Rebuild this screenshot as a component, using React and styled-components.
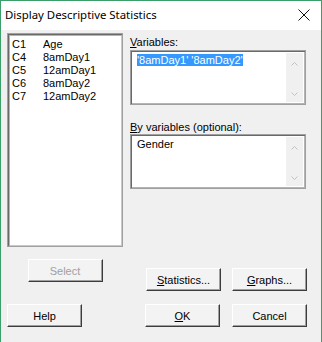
import React from 'react';
import styled, { createGlobalStyle } from 'styled-components';

const GlobalStyle = createGlobalStyle`
  html, body {
    margin: 0;
    padding: 0;
    background: #ffffff;
  }
  body {
    font-family: "Liberation Sans", Arial, sans-serif;
  }
`;

const Window = styled.div`
  width: 322px;
  height: 342px;
  box-sizing: border-box;
  border: 1px solid #3a9f68;
  border-bottom: none;
  background: #f0f0f0;
  display: flex;
  flex-direction: column;
  overflow: hidden;
`;

const TitleBar = styled.div`
  height: 29px;
  flex: none;
  background: #ffffff;
  display: flex;
  align-items: center;
  justify-content: space-between;
  padding: 0 11px 2px 4px;
  box-sizing: border-box;
  font-family: "Noto Sans", "Liberation Sans", sans-serif;
  font-size: 11.4px;
  color: #000000;
`;

const Body = styled.div`
  padding: 3px 0 0 6px;
  font-size: 11px;
  color: #000000;
`;

const MainRow = styled.div`
  display: flex;
  gap: 7px;
`;

const ListBox = styled.div`
  width: 116px;
  height: 214px;
  box-sizing: border-box;
  background: #ffffff;
  border: 1px solid #a0a0a0;
  box-shadow: inset 1px 1px 0 #696969, inset 2px 2px 0 #b4b4b4, inset -1px -1px 0 #c8c8c8;
  padding: 4px 0 0 4px;
`;

const ListRow = styled.div`
  display: flex;
  height: 13px;
  line-height: 13px;
  font-size: 11px;
`;

const ColId = styled.span`
  width: 31px;
  flex: none;
`;

const RightCol = styled.div`
  width: 176px;
  display: flex;
  flex-direction: column;
`;

const Label = styled.div`
  line-height: 13px;
  margin-top: ${(p) => p.$top}px;
  margin-bottom: ${(p) => p.$bottom}px;
`;

const TextBox = styled.div`
  height: 55px;
  box-sizing: border-box;
  background: #ffffff;
  border: 1px solid #a0a0a0;
  box-shadow: inset 1px 1px 0 #696969, inset -1px -1px 0 #b4b4b4;
  display: flex;
`;

const BoxText = styled.div`
  flex: 1;
  padding: 3px 0 0 6px;
  line-height: 13px;
  white-space: nowrap;
`;

const Selected = styled.span`
  background: #3399ff;
  color: #ffffff;
`;

const ScrollBar = styled.div`
  width: 17px;
  margin: 2px 2px 2px 0;
  background: #f0f0f0;
  display: flex;
  flex-direction: column;
  align-items: center;
  justify-content: space-between;
  padding: 9px 0 6px;
  box-sizing: border-box;
`;

const ButtonRow = styled.div`
  display: flex;
  margin-top: ${(p) => p.$top}px;
`;

const LeftCell = styled.div`
  width: 116px;
  display: flex;
  justify-content: ${(p) => p.$justify || 'flex-start'};
`;

const RightCell = styled.div`
  width: 177px;
  margin-left: 7px;
  display: flex;
  justify-content: flex-end;
  gap: ${(p) => p.$gap}px;
  padding-top: ${(p) => p.$pad || 0}px;
`;

const Button = styled.button`
  width: 75px;
  height: 23px;
  box-sizing: border-box;
  margin: 0;
  padding: 0;
  background: #f3f3f3;
  border-top: 1px solid #ffffff;
  border-left: 1px solid #ffffff;
  border-right: 1px solid #3c3c3c;
  border-bottom: 1px solid #3c3c3c;
  box-shadow: inset -1px -1px 0 #a0a0a0;
  font-family: "Liberation Sans", Arial, sans-serif;
  font-size: 11px;
  color: ${(p) => (p.disabled ? '#a0a0a0' : '#000000')};
  cursor: default;
`;

const Chevron = ({ up }) => (
  <svg width="7" height="4" viewBox="0 0 7 4">
    <path
      d={up ? 'M0.5 3.5 L3.5 0.5 L6.5 3.5' : 'M0.5 0.5 L3.5 3.5 L6.5 0.5'}
      fill="none"
      stroke="#c2c2c2"
      strokeWidth="1"
    />
  </svg>
);

const CloseIcon = () => (
  <svg width="12" height="12" viewBox="0 0 12 12">
    <path d="M0.5 0.5 L11.5 11.5 M11.5 0.5 L0.5 11.5" stroke="#111" strokeWidth="1" />
  </svg>
);

const columns = [
  ['C1', 'Age'],
  ['C4', '8amDay1'],
  ['C5', '12amDay1'],
  ['C6', '8amDay2'],
  ['C7', '12amDay2'],
];

export default function App() {
  return (
    <>
      <GlobalStyle />
      <Window>
        <TitleBar>
          <span>Display Descriptive Statistics</span>
          <CloseIcon />
        </TitleBar>
        <Body>
          <MainRow>
            <ListBox>
              {columns.map(([id, name]) => (
                <ListRow key={id}>
                  <ColId>{id}</ColId>
                  <span>{name}</span>
                </ListRow>
              ))}
            </ListBox>
            <RightCol>
              <Label $top={3} $bottom={1}>
                <u>V</u>ariables:
              </Label>
              <TextBox>
                <BoxText>
                  <Selected>'8amDay1' '8amDay2'</Selected>
                </BoxText>
                <ScrollBar>
                  <Chevron up />
                  <Chevron />
                </ScrollBar>
              </TextBox>
              <Label $top={16} $bottom={0}>
                <u>B</u>y variables (optional):
              </Label>
              <TextBox>
                <BoxText>Gender</BoxText>
                <ScrollBar>
                  <Chevron up />
                  <Chevron />
                </ScrollBar>
              </TextBox>
            </RightCol>
          </MainRow>
          <ButtonRow $top={12}>
            <LeftCell $justify="center">
              <Button disabled>Select</Button>
            </LeftCell>
            <RightCell $gap={11} $pad={9}>
              <Button>
                <u>S</u>tatistics...
              </Button>
              <Button>
                <u>G</u>raphs...
              </Button>
            </RightCell>
          </ButtonRow>
          <ButtonRow $top={13}>
            <LeftCell>
              <Button>Help</Button>
            </LeftCell>
            <RightCell $gap={12}>
              <Button>
                <u>O</u>K
              </Button>
              <Button>Cancel</Button>
            </RightCell>
          </ButtonRow>
        </Body>
      </Window>
    </>
  );
}
